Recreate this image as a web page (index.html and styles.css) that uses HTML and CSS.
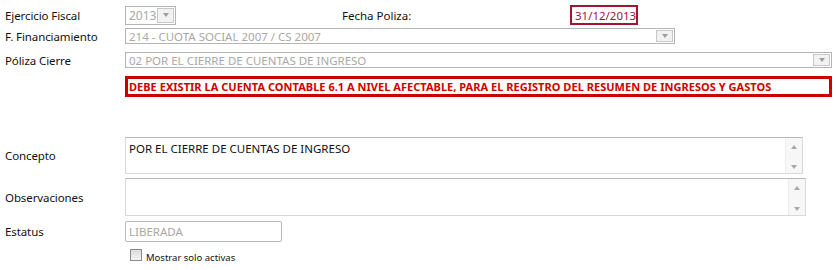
FILE: index.html
```html
<!DOCTYPE html>
<html>
<head>
<meta charset="utf-8">
<link rel="stylesheet" href="styles.css">
</head>
<body>
<div class="form">
  <div class="row r1">
    <div class="label">Ejercicio Fiscal</div>
    <div class="select year"><span class="val">2013</span><span class="btn"><span class="tri"></span></span></div>
    <div class="fecha-label">Fecha Poliza:</div>
    <div class="fecha">31/12/2013</div>
  </div>
  <div class="row r2">
    <div class="label">F. Financiamiento</div>
    <div class="select fin"><span class="val">214 - CUOTA SOCIAL 2007 / CS 2007</span><span class="btn"><span class="tri"></span></span></div>
  </div>
  <div class="row r3">
    <div class="label">Póliza Cierre</div>
    <div class="select pol"><span class="val">02 POR EL CIERRE DE CUENTAS DE INGRESO</span><span class="btn"><span class="tri"></span></span></div>
  </div>
  <div class="row r4">
    <div class="label"></div>
    <div class="error">DEBE EXISTIR LA CUENTA CONTABLE 6.1 A NIVEL AFECTABLE, PARA EL REGISTRO DEL RESUMEN DE INGRESOS Y GASTOS</div>
  </div>
  <div class="row r5">
    <div class="label">Concepto</div>
    <div class="area concepto"><span class="txt">POR EL CIERRE DE CUENTAS DE INGRESO</span><span class="scroll"><span class="up"></span><span class="down"></span></span></div>
  </div>
  <div class="row r6">
    <div class="label">Observaciones</div>
    <div class="area obs"><span class="txt"></span><span class="scroll"><span class="up"></span><span class="down"></span></span></div>
  </div>
  <div class="row r7">
    <div class="label">Estatus</div>
    <div class="input status">LIBERADA</div>
  </div>
  <div class="row r8">
    <div class="label"></div>
    <label class="check"><span class="box"></span><span class="ctext">Mostrar solo activas</span></label>
  </div>
</div>
</body>
</html>
```
FILE: styles.css
```css
html, body {
  margin: 0;
  padding: 0;
  background: #fff;
}
body {
  font-family: "Noto Sans", "Open Sans", sans-serif;
  font-size: 11.5px;
  color: #111;
}
.form {
  padding: 4px 0 0 5px;
  display: flex;
  flex-direction: column;
}
.row {
  display: flex;
  align-items: center;
}
.label {
  width: 120px;
  flex: none;
  letter-spacing: -0.1px;
}
.select {
  display: flex;
  align-items: stretch;
  border: 1px solid #b4b4b4;
  box-sizing: border-box;
  color: #a8a8a8;
  background: #fff;
}
.select .val {
  flex: 1;
  padding-left: 3px;
  display: flex;
  align-items: center;
  white-space: nowrap;
  overflow: hidden;
}
.select .btn {
  width: 15px;
  border: 1px solid #c8c8c8;
  margin: 1px;
  background: #f2f2f2;
  display: flex;
  align-items: center;
  justify-content: center;
}
.tri {
  width: 0;
  height: 0;
  border-left: 3.5px solid transparent;
  border-right: 3.5px solid transparent;
  border-top: 4px solid #9c9c9c;
}
.r1 { height: 20px; margin-top: 1px; }
.year { width: 51px; height: 19px; font-size: 12px; }
.fecha-label {
  margin-left: 166px;
  width: 229px;
}
.fecha {
  border: 2px solid #a3152e;
  color: #a3152e;
  height: 20px;
  width: 68px;
  box-sizing: border-box;
  padding-left: 3px;
  display: flex;
  align-items: center;
  margin-left: -1px;
}
.r2 { margin-top: 3px; }
.fin { width: 550px; height: 16px; }
.r3 { margin-top: 8px; }
.pol { width: 707px; height: 16px; }
.r4 { margin-top: 8px; }
.error {
  width: 707px;
  height: 21px;
  box-sizing: border-box;
  border: 3px solid #cc0000;
  color: #d00000;
  font-weight: bold;
  font-size: 11px;
  padding-left: 1px;
  display: flex;
  align-items: center;
  white-space: nowrap;
  letter-spacing: 0.03px;
}
.area {
  display: flex;
  box-sizing: border-box;
  border: 1px solid #d8d8d8;
  border-top-color: #b8b8b8;
  background: #fff;
}
.area .txt {
  flex: 1;
  padding: 3px 0 0 3px;
}
.area .scroll {
  width: 16px;
  border-left: 1px solid #ececec;
  background: #f7f7f7;
  display: flex;
  flex-direction: column;
  justify-content: space-between;
  align-items: center;
  padding: 7px 0 4px;
}
.up {
  width: 0; height: 0;
  border-left: 3.5px solid transparent;
  border-right: 3.5px solid transparent;
  border-bottom: 4px solid #a8a8a8;
}
.down {
  width: 0; height: 0;
  border-left: 3.5px solid transparent;
  border-right: 3.5px solid transparent;
  border-top: 4px solid #a8a8a8;
}
.r5 { margin-top: 40px; }
.concepto { width: 678px; height: 37px; }
.r6 { margin-top: 4px; }
.obs { width: 681px; height: 38px; }
.r7 { margin-top: 5px; }
.status {
  width: 157px;
  height: 21px;
  box-sizing: border-box;
  border: 1px solid #b8b8b8;
  border-radius: 2px;
  color: #a8a8a8;
  padding-left: 3px;
  display: flex;
  align-items: center;
}
.r8 { margin-top: 6px; }
.check {
  display: flex;
  align-items: center;
  margin-left: 5px;
  font-size: 9.5px;
}
.box {
  width: 10px;
  height: 10px;
  border: 1px solid #8a8a8a;
  background: linear-gradient(#dcdcdc, #f4f4f4);
  margin-right: 4px;
  margin-top: -2px;
}
.ctext { margin-top: 3px; }
```
